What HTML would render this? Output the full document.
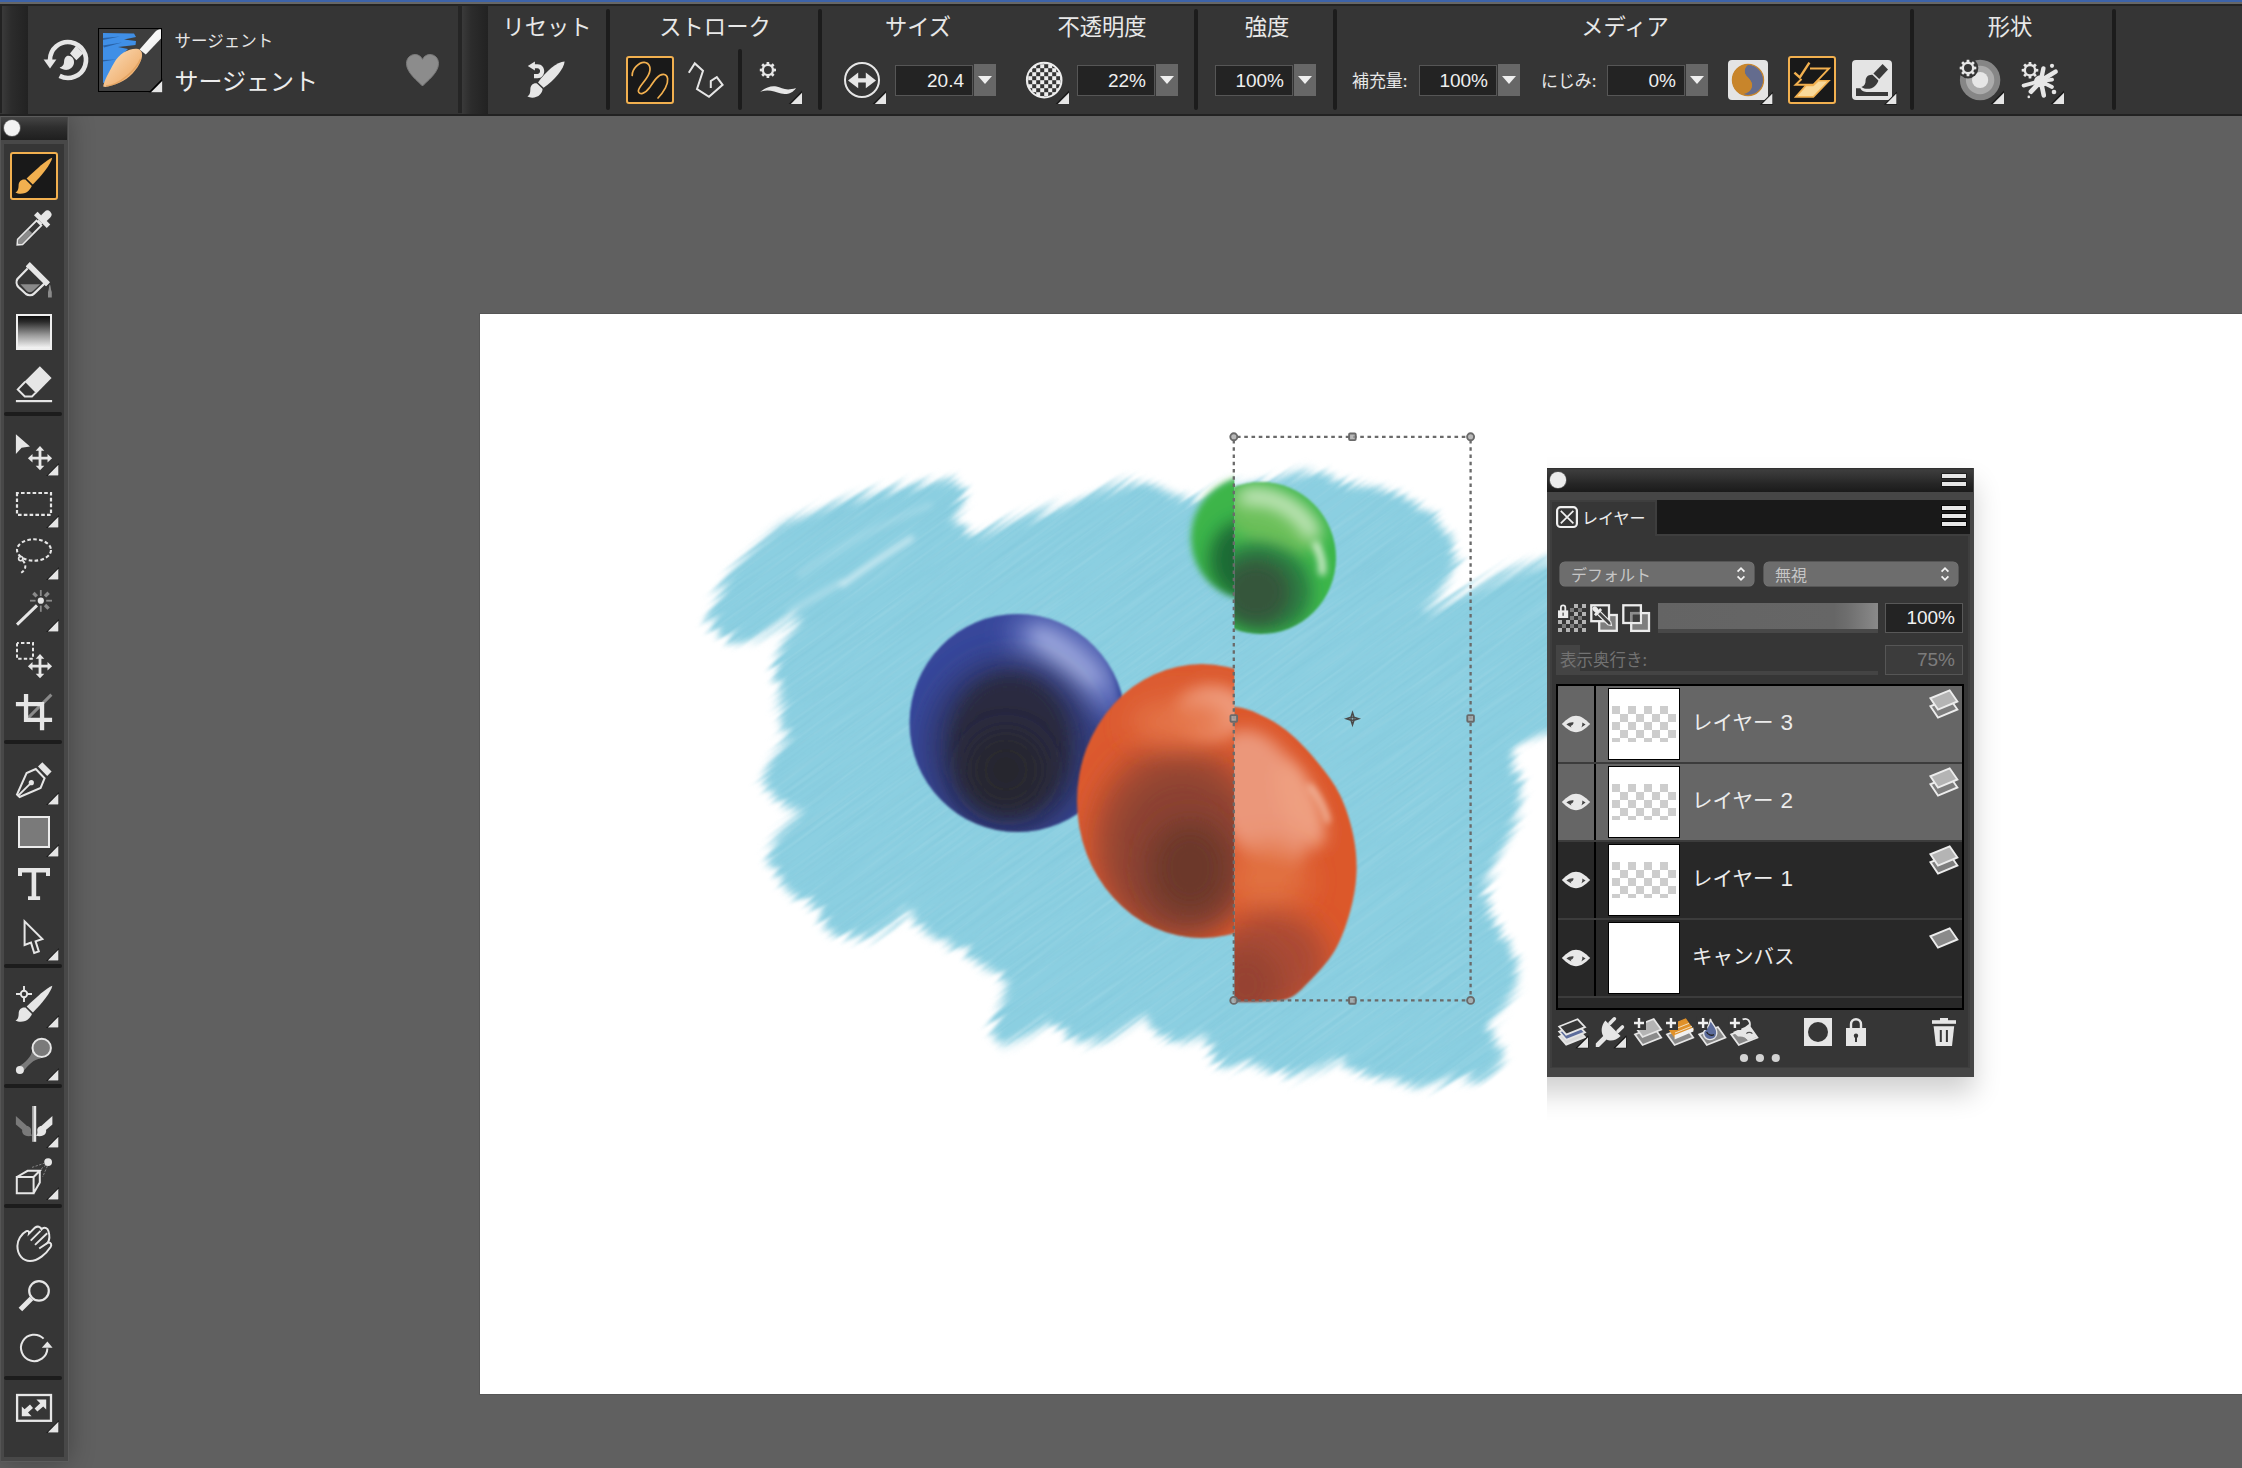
<!DOCTYPE html>
<html lang="ja">
<head>
<meta charset="utf-8">
<title>Painter</title>
<style>
*{box-sizing:border-box;margin:0;padding:0}
html,body{width:2242px;height:1468px;overflow:hidden;background:#606060;font-family:"Liberation Sans","Noto Sans CJK JP",sans-serif;color:#e6e6e6}
.abs{position:absolute}
#strip{left:0;top:0;width:2242px;height:2px;background:#3d63a9}
#topbar{left:0;top:2px;width:2242px;height:114px;background:#353535;border-top:2px solid #666;border-bottom:2px solid #222}
.grip{top:6px;height:108px;background:linear-gradient(90deg,#3a3a3a 0%,#2c2c2c 35%,#222 100%)}
.vsep{width:4px;background:#1c1c1c;border-radius:2px}
.lbl{font-size:22.3px;color:#e8e8e8;white-space:nowrap;line-height:28px;height:28px;text-align:center;font-family:"Noto Sans CJK JP",sans-serif;font-weight:400}
.inp{height:31px;background:#232323;border:1px solid #565656;color:#efefef;font-size:19px;line-height:29px;text-align:right;padding-right:8px;font-family:"Liberation Sans",sans-serif}
.dd{width:22px;height:32px;background:#676767}
.dd:after{content:"";position:absolute;left:4px;top:12px;border-left:7px solid transparent;border-right:7px solid transparent;border-top:8.5px solid #efefef}
.sm{font-size:16.9px;color:#e8e8e8;white-space:nowrap;line-height:24px;font-family:"Noto Sans CJK JP",sans-serif}
.tri{width:0;height:0;border-left:11px solid transparent;border-bottom:11px solid #e6e6e6}
.selbtn{width:48px;height:48px;background:#191919;border:2px solid #f2b04f;border-radius:3px}
#canvas{left:480px;top:314px;width:1762px;height:1080px;background:#fff;box-shadow:0 0 0 1px #565656}
svg{position:absolute;overflow:visible}
</style>
</head>
<body>
<div class="abs" id="canvas"></div>
<!--PAINTING-S-->
<svg style="left:480px;top:314px" width="1762" height="1079" viewBox="480 314 1762 1079">
<defs>
<filter id="fw" x="-10%" y="-10%" width="120%" height="120%" color-interpolation-filters="sRGB"><feGaussianBlur in="SourceGraphic" stdDeviation="4" result="b"/><feTurbulence type="fractalNoise" baseFrequency="0.006 0.22" numOctaves="2" seed="7" result="n"/><feDisplacementMap in="b" in2="n" scale="20" xChannelSelector="R" yChannelSelector="B" result="d"/><feGaussianBlur in="d" stdDeviation="0.9" result="d2"/><feTurbulence type="fractalNoise" baseFrequency="0.01 0.3" numOctaves="2" seed="11" result="n2"/><feColorMatrix in="n2" type="matrix" values="0 0 0 0 1  0 0 0 0 1  0 0 0 0 1  0 0.2 0 0 -0.092" result="w"/><feColorMatrix in="n2" type="matrix" values="0 0 0 0 0.30  0 0 0 0 0.62  0 0 0 0 0.74  0.18 0 0 0 -0.081" result="k"/><feComposite in="w" in2="d2" operator="in" result="wi"/><feComposite in="k" in2="d2" operator="in" result="ki"/><feMerge><feMergeNode in="d2"/><feMergeNode in="ki"/><feMergeNode in="wi"/></feMerge></filter>
<filter id="f1" x="-5%" y="-5%" width="110%" height="110%"><feGaussianBlur stdDeviation="1.3"/></filter>
<filter id="f3" filterUnits="userSpaceOnUse" x="680" y="420" width="900" height="700"><feGaussianBlur stdDeviation="3"/></filter>
<filter id="f8" filterUnits="userSpaceOnUse" x="680" y="420" width="900" height="700"><feGaussianBlur stdDeviation="8"/></filter>
<filter id="f14" filterUnits="userSpaceOnUse" x="680" y="420" width="900" height="700"><feGaussianBlur stdDeviation="14"/></filter>
<clipPath id="cL"><rect x="480" y="314" width="754.4" height="1079"/></clipPath>
<clipPath id="cR"><rect x="1234.4" y="314" width="1100" height="1079"/></clipPath>
<clipPath id="cBlue"><ellipse cx="1017.5" cy="723" rx="108" ry="109"/></clipPath>
<clipPath id="cOL"><ellipse cx="1202" cy="801" rx="125" ry="137"/></clipPath>
<clipPath id="cOR"><path d="M1200.0 712.0 C1206.0 711.2 1224.8 706.0 1236.0 707.0 C1247.2 708.0 1257.5 713.2 1267.0 718.0 C1276.5 722.8 1284.3 728.3 1293.0 736.0 C1301.7 743.7 1311.2 754.2 1319.0 764.0 C1326.8 773.8 1334.3 783.3 1340.0 795.0 C1345.7 806.7 1350.2 821.0 1353.0 834.0 C1355.8 847.0 1357.0 860.0 1356.5 873.0 C1356.0 886.0 1353.7 899.0 1350.0 912.0 C1346.3 925.0 1341.4 939.3 1334.5 951.0 C1327.6 962.7 1316.3 974.1 1308.6 982.0 C1300.8 989.9 1296.1 995.4 1288.0 998.6 C1279.9 1001.9 1268.8 1000.9 1260.0 1001.5 C1251.2 1002.1 1245.0 1002.1 1235.0 1002.0 C1225.0 1001.9 1205.8 1001.2 1200.0 1001.0 Z"/></clipPath>
<clipPath id="cGL"><ellipse cx="1251" cy="538" rx="60" ry="62"/></clipPath>
<clipPath id="cGR"><ellipse cx="1261" cy="558" rx="75" ry="76"/></clipPath>
<pattern id="hatch" width="7" height="7" patternUnits="userSpaceOnUse" patternTransform="rotate(-38)"><rect width="7" height="7" fill="none"/><rect y="0" width="7" height="1.1" fill="#ffffff" fill-opacity="0.10"/><rect y="3.6" width="7" height="0.9" fill="#5fb4cc" fill-opacity="0.10"/></pattern>
</defs>
<g transform="rotate(-36 1100 780)" filter="url(#fw)"><g transform="rotate(36 1100 780)"><polygon points="707,625 716,600 731,571 756,546 781,524 830,504 880,490 930,482 955,480 966,491 960,510 953,522 975,535 1005,523 1055,506 1105,490 1130,482 1150,484 1175,495 1200,500 1235,484 1275,479 1305,471 1325,474 1350,484 1375,487 1400,494 1424,509 1443,526 1453,545 1457,560 1448,580 1434,599 1421,613 1450,599 1475,588 1500,576 1525,566 1547,560 1620,545 1620,715 1547,734 1525,743 1512,748 1515,770 1521,787 1518,810 1508,835 1493,867 1484,890 1488,900 1493,920 1503,935 1517,960 1517,985 1503,1009 1489,1024 1493,1035 1502,1055 1493,1070 1479,1080 1460,1078 1440,1083 1415,1088 1395,1080 1375,1078 1350,1070 1340,1059 1325,1068 1290,1078 1270,1070 1250,1063 1225,1068 1212,1059 1206,1034 1180,1043 1156,1034 1145,1016 1130,1024 1105,1040 1080,1043 1061,1034 1050,1020 1030,1033 1001,1048 994,1035 997,1010 1006,985 1001,972 976,964 963,949 943,943 918,928 910,908 895,923 870,938 846,938 827,929 821,910 801,899 782,884 767,860 777,835 801,811 782,804 762,785 769,765 787,735 777,715 782,690 774,665 782,640 801,616 790,616 756,637 731,641" fill="#8bcfe1"/></g></g>
<g filter="url(#f3)" stroke-linecap="round" fill="none"><path d="M842 585 C860 572 885 555 912 538" stroke="#fff" stroke-opacity="0.85" stroke-width="3.4"/><path d="M800 575 C830 552 870 528 930 505" stroke="#fff" stroke-opacity="0.22" stroke-width="5"/><path d="M790 612 C810 600 828 590 842 582" stroke="#fff" stroke-opacity="0.35" stroke-width="5"/><path d="M1425 610 C1460 598 1500 580 1540 566" stroke="#fff" stroke-opacity="0.25" stroke-width="4"/></g>
<g filter="url(#f1)"><g clip-path="url(#cBlue)"><rect x="900" y="605" width="240" height="240" fill="#37479b"/><ellipse cx="1068" cy="664" rx="66" ry="34" transform="rotate(39 1068 664)" fill="#6f7ec6" filter="url(#f14)"/><ellipse cx="1066" cy="658" rx="44" ry="13" transform="rotate(39 1066 658)" fill="#9ca8de" filter="url(#f8)"/><ellipse cx="1012" cy="748" rx="84" ry="90" fill="#2e3666" filter="url(#f14)"/><ellipse cx="1010" cy="745" rx="60" ry="70" fill="#292b40" filter="url(#f8)"/><ellipse cx="1006" cy="770" rx="40" ry="40" fill="#27282e" filter="url(#f14)"/><path d="M1096 630 C1112 648 1122 675 1124 700" stroke="#2f4297" stroke-width="9" fill="none" filter="url(#f3)"/></g></g>
<g clip-path="url(#cL)"><g filter="url(#f3)"><g clip-path="url(#cGL)"><rect x="1180" y="470" width="140" height="140" fill="#3cb54a"/><ellipse cx="1245" cy="560" rx="36" ry="40" fill="#1d6a36" filter="url(#f8)"/></g></g></g>
<g clip-path="url(#cR)"><g filter="url(#f1)"><g clip-path="url(#cGR)"><rect x="1180" y="478" width="170" height="165" fill="#3cb64b"/><ellipse cx="1272" cy="520" rx="52" ry="30" transform="rotate(25 1272 520)" fill="#6cc05a" filter="url(#f8)"/><path d="M1246 497 C1275 494 1300 510 1312 532" stroke="#cfecca" stroke-width="15" fill="none" stroke-linecap="round" filter="url(#f8)"/><path d="M1316 545 C1321 555 1323 563 1322 572" stroke="#d4efd0" stroke-width="7" fill="none" stroke-linecap="round" filter="url(#f3)"/><ellipse cx="1262" cy="588" rx="50" ry="44" transform="rotate(20 1262 588)" fill="#2c7c42" filter="url(#f8)"/><ellipse cx="1256" cy="592" rx="34" ry="32" fill="#34573a" filter="url(#f8)"/></g></g></g>
<g clip-path="url(#cL)"><g filter="url(#f1)"><g clip-path="url(#cOL)"><rect x="1070" y="660" width="170" height="285" fill="#dc5a2f"/><ellipse cx="1178" cy="842" rx="86" ry="98" fill="#a94c33" filter="url(#f14)"/><ellipse cx="1182" cy="850" rx="70" ry="82" fill="#8c4230" filter="url(#f14)"/><ellipse cx="1190" cy="868" rx="42" ry="48" fill="#6c392b" filter="url(#f14)"/><ellipse cx="1212" cy="712" rx="36" ry="26" fill="#f0a184" filter="url(#f8)"/><ellipse cx="1180" cy="722" rx="50" ry="22" fill="#e4744a" filter="url(#f14)"/></g></g></g>
<g clip-path="url(#cR)"><g filter="url(#f1)"><g clip-path="url(#cOR)"><rect x="1230" y="700" width="135" height="310" fill="#dc582c"/><ellipse cx="1262" cy="800" rx="44" ry="74" transform="rotate(-22 1262 800)" fill="#eb977a" filter="url(#f8)"/><ellipse cx="1300" cy="805" rx="18" ry="46" transform="rotate(-24 1300 805)" fill="#ee9f80" filter="url(#f8)"/><ellipse cx="1268" cy="880" rx="40" ry="34" fill="#e1703f" filter="url(#f14)"/><ellipse cx="1272" cy="962" rx="56" ry="50" fill="#aa4b35" filter="url(#f14)"/><ellipse cx="1246" cy="985" rx="36" ry="40" fill="#964332" filter="url(#f14)"/><path d="M1310 786 C1318 796 1325 808 1328 821" stroke="#f6cdb8" stroke-width="4" fill="none" stroke-linecap="round" filter="url(#f3)"/></g></g></g>
<g fill="none" stroke="#6a6a6a" stroke-width="2.3" stroke-dasharray="3.6 3.65"><path d="M1237 436.8 L1467 436.8 M1237 1000.4 L1467 1000.4 M1233.8 440 L1233.8 997 M1470.6 440 L1470.6 997"/></g>
<circle cx="1233.8" cy="436.8" r="3.5" fill="#a8a8a8" fill-opacity="0.8" stroke="#6a6a6a" stroke-width="1.9"/>
<circle cx="1470.6" cy="436.8" r="3.5" fill="#a8a8a8" fill-opacity="0.8" stroke="#6a6a6a" stroke-width="1.9"/>
<circle cx="1233.8" cy="1000.4" r="3.5" fill="#a8a8a8" fill-opacity="0.8" stroke="#6a6a6a" stroke-width="1.9"/>
<circle cx="1470.6" cy="1000.4" r="3.5" fill="#a8a8a8" fill-opacity="0.8" stroke="#6a6a6a" stroke-width="1.9"/>
<rect x="1349.1" y="433.5" width="6.6" height="6.6" rx="1" fill="#a8a8a8" fill-opacity="0.8" stroke="#6a6a6a" stroke-width="1.9"/>
<rect x="1349.1" y="997.1" width="6.6" height="6.6" rx="1" fill="#a8a8a8" fill-opacity="0.8" stroke="#6a6a6a" stroke-width="1.9"/>
<rect x="1230.5" y="715.1" width="6.6" height="6.6" rx="1" fill="#a8a8a8" fill-opacity="0.8" stroke="#6a6a6a" stroke-width="1.9"/>
<rect x="1467.3" y="715.1" width="6.6" height="6.6" rx="1" fill="#a8a8a8" fill-opacity="0.8" stroke="#6a6a6a" stroke-width="1.9"/>
<path d="M1352.5 712.6 L1354 717.2 L1358.6 718.7 L1354 720.2 L1352.5 724.8 L1351 720.2 L1346.4 718.7 L1351 717.2 Z" fill="#8a8a8a" fill-opacity="0.5" stroke="#4a4a4a" stroke-width="1.5"/><circle cx="1352.5" cy="718.7" r="1.6" fill="none" stroke="#4a4a4a" stroke-width="1.2"/>
</svg>
<!--PAINTING-E-->
<!--TOOLBOX-S-->
<div class="abs" style="left:0;top:116px;width:69px;height:1346px;background:#484848;border:1px solid #5c5c5c;border-left-color:#555;box-shadow:0 0 26px rgba(0,0,0,0.30)"></div>
<div class="abs" style="left:1px;top:117px;width:66px;height:23px;background:linear-gradient(180deg,#454545 0%,#2e2e2e 45%,#1f1f1f 100%)"></div>
<div class="abs" style="left:4px;top:120px;width:16px;height:16px;border-radius:50%;background:#f2f2f2;box-shadow:0 0 0 0.8px #666"></div>
<div class="abs" style="left:4px;top:144px;width:60px;height:1313px;background:#363636"></div>
<div class="abs" style="left:4px;top:412px;width:58px;height:4px;border-radius:2px;background:#1c1c1c"></div>
<div class="abs" style="left:4px;top:740px;width:58px;height:4px;border-radius:2px;background:#1c1c1c"></div>
<div class="abs" style="left:4px;top:964px;width:58px;height:4px;border-radius:2px;background:#1c1c1c"></div>
<div class="abs" style="left:4px;top:1084px;width:58px;height:4px;border-radius:2px;background:#1c1c1c"></div>
<div class="abs" style="left:4px;top:1204px;width:58px;height:4px;border-radius:2px;background:#1c1c1c"></div>
<div class="abs" style="left:4px;top:1376px;width:58px;height:4px;border-radius:2px;background:#1c1c1c"></div>
<div class="abs selbtn" style="left:10px;top:152px"></div>
<svg style="left:8px;top:152px" width="54" height="48" viewBox="8 152 54 48"><path d="M52.2 157.8 C47.0 159.4 36.0 169.6 26.6 178.4 L32.8 184.6 C41.6 175.6 51.4 163.6 52.2 157.8 Z" fill="#f2b04f"/><path d="M25.4 179.6 C21.6 178.8 18.8 181.4 18.6 185.0 C18.5 188.6 18.2 191.0 15.4 192.6 C19.4 194.8 25.6 194.0 28.8 190.6 C31.4 187.6 32.2 185.6 31.6 185.8 Z" fill="#f2b04f"/></svg>
<svg style="left:8px;top:204px" width="54" height="48" viewBox="8 204 54 48"><g transform="rotate(45 34 228)"><rect x="30" y="205" width="8" height="12" rx="4" fill="#e6e6e6"/><rect x="25" y="214" width="18" height="5" fill="#e6e6e6"/><rect x="31.2" y="219" width="5.6" height="4" fill="#e6e6e6"/><path d="M30.6 221 L37.4 221 L37.4 247.6 L34 251.6 L30.6 247.6 Z" fill="#353535" stroke="#e6e6e6" stroke-width="1.8"/><path d="M31.4 233 L36.6 233 L36.6 247.2 L34 250.2 L31.4 247.2 Z" fill="#8a8a8a"/></g></svg>
<svg style="left:8px;top:256px" width="54" height="48" viewBox="8 256 54 48"><path d="M27.6 268.6 L17.4 279 C16 281 16.4 284.6 18.4 287 L26 294 C28.4 295.8 32 295.6 34 293.6 L44.4 283.6" fill="none" stroke="#e6e6e6" stroke-width="2.2"/><path d="M20.4 284.2 L40.2 284.2 L33 291 C31 292.6 28.6 292.6 27 291.2 Z" fill="#8a8a8a"/><path d="M29.8 262 L50 282.2 L46 286.2 L44 284.2 L45 283 L29.4 267.6 L28 268.8 L25.8 266.4 Z" fill="#e6e6e6"/><path d="M27.6 264.6 L47.6 284.4" stroke="#e6e6e6" stroke-width="4.6"/><path d="M49.8 284.6 C50.6 284.6 50.8 290 51.8 292 L51.8 297.4 L48 297.4 L48 292 C49 290 49 284.6 49.8 284.6 Z" fill="#8a8a8a"/></svg>
<div class="abs" style="left:16px;top:314px;width:36px;height:36px;border:2px solid #efefef;background:linear-gradient(180deg,#0c0c0c 0%,#2a2a2a 18%,#9a9a9a 60%,#f4f4f4 100%)"></div>
<svg style="left:8px;top:360px" width="54" height="48" viewBox="8 360 54 48"><path d="M39.9 366.2 L51.6 378 L32.4 397.4 L24.4 397.4 L16.6 389.6 Z" fill="#353535"/><path d="M39.9 366.2 L51.6 378 L36.4 393.4 L24.6 381.6 Z" fill="#e6e6e6"/><path d="M25.2 381.8 L17.8 389.4 L24.8 396.4 L32 396.4 L35.8 392.6" fill="none" stroke="#e6e6e6" stroke-width="2"/><rect x="15.9" y="400" width="36.2" height="2.2" fill="#e6e6e6"/></svg>
<svg style="left:8px;top:428px" width="54" height="50" viewBox="8 428 54 50"><path d="M15.9 434.2 L30 446.6 L21.6 447.8 L15.9 454 Z" fill="#e6e6e6"/><path d="M40.0 446.1 L44.3 450.7 L41.4 450.7 L41.4 456.8 L47.5 456.8 L47.5 453.9 L52.1 458.2 L47.5 462.5 L47.5 459.6 L41.4 459.6 L41.4 465.7 L44.3 465.7 L40.0 470.3 L35.7 465.7 L38.6 465.7 L38.6 459.6 L32.5 459.6 L32.5 462.5 L27.9 458.2 L32.5 453.9 L32.5 456.8 L38.6 456.8 L38.6 450.7 L35.7 450.7 Z" fill="#e6e6e6"/></svg>
<svg style="left:45.8px;top:463.4px" width="13" height="13" viewBox="0 0 13 13"><path d="M13 0 L13 13 L0 13 Z" fill="#1a1a1a"/><path d="M12.4 1.8 L12.4 12.4 L1.8 12.4 Z" fill="#e6e6e6"/></svg>
<svg style="left:8px;top:480px" width="54" height="50" viewBox="8 480 54 50"><rect x="17" y="493" width="34" height="21.8" fill="none" stroke="#e6e6e6" stroke-width="2.2" stroke-dasharray="3.6 2.2" stroke-dashoffset="1.8"/></svg>
<svg style="left:45.8px;top:515.4px" width="13" height="13" viewBox="0 0 13 13"><path d="M13 0 L13 13 L0 13 Z" fill="#1a1a1a"/><path d="M12.4 1.8 L12.4 12.4 L1.8 12.4 Z" fill="#e6e6e6"/></svg>
<svg style="left:8px;top:532px" width="54" height="50" viewBox="8 532 54 50"><ellipse cx="34" cy="550" rx="17" ry="10.7" fill="none" stroke="#e6e6e6" stroke-width="2.1" stroke-dasharray="3.6 2.3"/><circle cx="20.7" cy="558.6" r="2.1" fill="none" stroke="#e6e6e6" stroke-width="1.6"/><path d="M22.6 560.4 C27 565 26 570 20.4 573.2" fill="none" stroke="#e6e6e6" stroke-width="2" stroke-dasharray="3.4 2.2"/></svg>
<svg style="left:45.8px;top:567.4px" width="13" height="13" viewBox="0 0 13 13"><path d="M13 0 L13 13 L0 13 Z" fill="#1a1a1a"/><path d="M12.4 1.8 L12.4 12.4 L1.8 12.4 Z" fill="#e6e6e6"/></svg>
<svg style="left:8px;top:584px" width="54" height="50" viewBox="8 584 54 50"><path d="M17 624.6 L37 605.4" stroke="#e6e6e6" stroke-width="3" fill="none"/><circle cx="40.8" cy="600.7" r="3.1" fill="#e6e6e6"/><path d="M40.8 590.0 L40.8 596.0" stroke="#8a8a8a" stroke-width="1.8"/><path d="M40.8 605.6 L40.8 611.8" stroke="#8a8a8a" stroke-width="1.8"/><path d="M30.0 600.7 L35.6 600.7" stroke="#8a8a8a" stroke-width="1.8"/><path d="M46.2 600.7 L52.0 600.7" stroke="#8a8a8a" stroke-width="1.8"/><path d="M33.4 593.0 L36.8 596.4" stroke="#8a8a8a" stroke-width="3.4"/><path d="M45.0 596.4 L48.6 592.8" stroke="#8a8a8a" stroke-width="3.4"/><path d="M45.0 605.0 L48.6 608.6" stroke="#8a8a8a" stroke-width="3.4"/></svg>
<svg style="left:45.8px;top:619.4px" width="13" height="13" viewBox="0 0 13 13"><path d="M13 0 L13 13 L0 13 Z" fill="#1a1a1a"/><path d="M12.4 1.8 L12.4 12.4 L1.8 12.4 Z" fill="#e6e6e6"/></svg>
<svg style="left:8px;top:636px" width="54" height="48" viewBox="8 636 54 48"><rect x="17" y="643" width="16" height="15.8" fill="none" stroke="#e6e6e6" stroke-width="2" stroke-dasharray="3.4 2.2" stroke-dashoffset="1.6"/><path d="M40.0 654.1 L44.3 658.7 L41.4 658.7 L41.4 664.8 L47.5 664.8 L47.5 661.9 L52.1 666.2 L47.5 670.5 L47.5 667.6 L41.4 667.6 L41.4 673.7 L44.3 673.7 L40.0 678.3 L35.7 673.7 L38.6 673.7 L38.6 667.6 L32.5 667.6 L32.5 670.5 L27.9 666.2 L32.5 661.9 L32.5 664.8 L38.6 664.8 L38.6 658.7 L35.7 658.7 Z" fill="#e6e6e6"/></svg>
<svg style="left:8px;top:688px" width="54" height="48" viewBox="8 688 54 48"><path d="M28.4 717.6 L51.4 694.6" stroke="#8a8a8a" stroke-width="3"/><path d="M15.9 702 L44.2 702 L44.2 730.2 L39.9 730.2 L39.9 706.3 L15.9 706.3 Z" fill="#e6e6e6"/><path d="M23.9 694 L28.2 694 L28.2 717.7 L52.1 717.7 L52.1 722 L23.9 722 Z" fill="#e6e6e6"/></svg>
<svg style="left:8px;top:756px" width="54" height="50" viewBox="8 756 54 50"><path d="M42.3 762.2 L51.6 771.6 L47.2 776 L38 766.6 Z" fill="#e6e6e6"/><path d="M35.8 769 L26.6 773 L17 794.6 L19.6 797 L40.6 788 L44.6 778.2 Z" fill="none" stroke="#e6e6e6" stroke-width="2" stroke-linejoin="miter"/><path d="M17.8 796 L30.6 783.4" stroke="#e6e6e6" stroke-width="1.8"/><circle cx="31.3" cy="782.7" r="2.6" fill="#e6e6e6"/></svg>
<svg style="left:45.8px;top:791.6px" width="13" height="13" viewBox="0 0 13 13"><path d="M13 0 L13 13 L0 13 Z" fill="#1a1a1a"/><path d="M12.4 1.8 L12.4 12.4 L1.8 12.4 Z" fill="#e6e6e6"/></svg>
<div class="abs" style="left:18px;top:816px;width:32px;height:32px;border:2px solid #ececec;background:#7a7a7a"></div>
<svg style="left:45.8px;top:843.6px" width="13" height="13" viewBox="0 0 13 13"><path d="M13 0 L13 13 L0 13 Z" fill="#1a1a1a"/><path d="M12.4 1.8 L12.4 12.4 L1.8 12.4 Z" fill="#e6e6e6"/></svg>
<svg style="left:8px;top:860px" width="54" height="48" viewBox="8 860 54 48"><path d="M18 868.1 L50 868.1 L50 876 L46 876 L46 872.4 L36.2 872.4 L36.2 896.3 L40.1 896.3 L40.1 900 L28 900 L28 896.3 L31.6 896.3 L31.6 872.4 L22 872.4 L22 876 L18 876 Z" fill="#e6e6e6"/></svg>
<svg style="left:8px;top:912px" width="54" height="50" viewBox="8 912 54 50"><path d="M24.6 921.4 L24.6 945 L31 942.6 L34.2 953 L38.8 951.4 L35.6 941.4 L42.4 939 Z" fill="none" stroke="#e6e6e6" stroke-width="2" stroke-linejoin="miter"/></svg>
<svg style="left:45.8px;top:947.6px" width="13" height="13" viewBox="0 0 13 13"><path d="M13 0 L13 13 L0 13 Z" fill="#1a1a1a"/><path d="M12.4 1.8 L12.4 12.4 L1.8 12.4 Z" fill="#e6e6e6"/></svg>
<svg style="left:8px;top:980px" width="54" height="50" viewBox="8 980 54 50"><path d="M52.3 985.8 C47.1 987.4 36.1 997.6 26.7 1006.4 L32.9 1012.6 C41.7 1003.6 51.5 991.6 52.3 985.8 Z" fill="#e6e6e6"/><path d="M25.5 1007.6 C21.7 1006.8 18.9 1009.4 18.7 1013.0 C18.6 1016.6 18.3 1019.0 15.5 1020.6 C19.5 1022.8 25.7 1022.0 28.9 1018.6 C31.5 1015.6 32.3 1013.6 31.7 1013.8 Z" fill="#e6e6e6"/><path d="M16 994 L32 994 M24 986 L24 1002" stroke="#e6e6e6" stroke-width="1.9"/><circle cx="24" cy="994" r="3.2" fill="#363636" stroke="#e6e6e6" stroke-width="1.9"/></svg>
<svg style="left:45.8px;top:1015.2px" width="13" height="13" viewBox="0 0 13 13"><path d="M13 0 L13 13 L0 13 Z" fill="#1a1a1a"/><path d="M12.4 1.8 L12.4 12.4 L1.8 12.4 Z" fill="#e6e6e6"/></svg>
<svg style="left:8px;top:1032px" width="54" height="50" viewBox="8 1032 54 50"><path d="M32.4 1050 C31.6 1057 25 1062.6 17.6 1067.4 L22.6 1072.6 C27.6 1065.4 33.6 1059 41 1058.4 Z" fill="#7a7a7a"/><circle cx="41.7" cy="1047.9" r="9.2" fill="#7a7a7a" stroke="#e6e6e6" stroke-width="2"/><circle cx="19.9" cy="1070" r="4" fill="#e6e6e6"/></svg>
<svg style="left:45.8px;top:1067.6px" width="13" height="13" viewBox="0 0 13 13"><path d="M13 0 L13 13 L0 13 Z" fill="#1a1a1a"/><path d="M12.4 1.8 L12.4 12.4 L1.8 12.4 Z" fill="#e6e6e6"/></svg>
<svg style="left:8px;top:1100px" width="54" height="50" viewBox="8 1100 54 50"><path d="M15.9 1116 L15.9 1124.6 L23.6 1131 L27.6 1126.4 Z" fill="#7a7a7a"/><path d="M24.2 1127 C27.6 1124.4 31.6 1127.4 31 1131 C30.6 1133.4 31.2 1134.8 32.6 1135.6 C29 1137 24.6 1136.4 22.8 1133.6 C21.4 1131.4 22.2 1128.6 24.2 1127 Z" fill="#7a7a7a"/><path d="M52.4 1116 L52.4 1124.6 L44.7 1131 L40.7 1126.4 Z" fill="#e6e6e6"/><path d="M44.1 1127 C40.7 1124.4 36.7 1127.4 37.3 1131 C37.7 1133.4 37.1 1134.8 35.7 1135.6 C39.3 1137 43.7 1136.4 45.5 1133.6 C46.9 1131.4 46.1 1128.6 44.1 1127 Z" fill="#e6e6e6"/><rect x="32.1" y="1106" width="1.5" height="35.8" fill="#a8a8a8"/><rect x="33.5" y="1106" width="2.7" height="35.8" fill="#e6e6e6"/></svg>
<svg style="left:45.8px;top:1135.4px" width="13" height="13" viewBox="0 0 13 13"><path d="M13 0 L13 13 L0 13 Z" fill="#1a1a1a"/><path d="M12.4 1.8 L12.4 12.4 L1.8 12.4 Z" fill="#e6e6e6"/></svg>
<svg style="left:8px;top:1152px" width="54" height="50" viewBox="8 1152 54 50"><path d="M16.8 1177 L33.6 1177 L33.6 1193.2 L16.8 1193.2 Z M16.8 1177 L27.6 1170.8 L39.8 1170.8 L33.6 1177 M39.8 1170.8 L39.8 1182.4 L33.6 1193.2" fill="none" stroke="#e6e6e6" stroke-width="2" stroke-linejoin="miter"/><circle cx="48.1" cy="1162.1" r="3.9" fill="#e6e6e6"/><path d="M45 1163 L32 1167.4 M46 1165 L40.6 1169.4 M47.4 1166 L42.6 1177" stroke="#8a8a8a" stroke-width="0.9" stroke-dasharray="2.4 1.4" fill="none"/></svg>
<svg style="left:45.8px;top:1187.4px" width="13" height="13" viewBox="0 0 13 13"><path d="M13 0 L13 13 L0 13 Z" fill="#1a1a1a"/><path d="M12.4 1.8 L12.4 12.4 L1.8 12.4 Z" fill="#e6e6e6"/></svg>
<svg style="left:8px;top:1220px" width="54" height="48" viewBox="8 1220 54 48"><path d="M26.4 1231.2 C21 1234 17.4 1240 17.4 1246 C17.4 1255 23 1261 30 1261 C38 1261 46 1254 50.6 1247 C52 1244.6 51 1242.4 48.6 1242.4 L47.6 1242.8 C49.6 1240 50 1236 48.4 1231 C47.6 1228.4 45 1227 42.6 1228.4 L41.6 1229.4 C40.6 1226.6 37.4 1225.8 35 1227.6 L29 1233.6 C29.4 1231.4 28 1230.4 26.4 1231.2 Z" fill="none" stroke="#e6e6e6" stroke-width="2"/><path d="M30.7 1240.6 L40.5 1230.8 M35 1244.9 L47.2 1233.2 M39.2 1248.5 L48 1242.6" stroke="#e6e6e6" stroke-width="1.9" fill="none"/></svg>
<svg style="left:8px;top:1272px" width="54" height="48" viewBox="8 1272 54 48"><circle cx="39" cy="1290.9" r="9.8" fill="none" stroke="#e6e6e6" stroke-width="2.2"/><path d="M31.4 1298.6 L20.4 1309.6" stroke="#e6e6e6" stroke-width="5"/></svg>
<svg style="left:8px;top:1324px" width="54" height="48" viewBox="8 1324 54 48"><path d="M47.4 1348.4 A13.2 13.2 0 1 1 43.6 1338.6" fill="none" stroke="#e6e6e6" stroke-width="2"/><path d="M41.8 1347.8 L47.4 1341.4 L52.6 1347.8 Z" fill="#e6e6e6"/></svg>
<svg style="left:8px;top:1384px" width="54" height="50" viewBox="8 1384 54 50"><rect x="17.1" y="1395" width="33.9" height="25.8" fill="none" stroke="#e6e6e6" stroke-width="2.3"/><path d="M21.8 1416.2 L21.8 1406.4 L24.6 1409.2 L30 1404.6 L33 1408 L28 1412.4 L31.6 1416.2 Z" fill="#e6e6e6"/><path d="M46.2 1399.4 L46.2 1409.4 L43.2 1406.4 L37.4 1411.6 L34.6 1408.4 L40.2 1403.2 L36.4 1399.4 Z" fill="#e6e6e6"/></svg>
<svg style="left:45.8px;top:1419.6px" width="13" height="13" viewBox="0 0 13 13"><path d="M13 0 L13 13 L0 13 Z" fill="#1a1a1a"/><path d="M12.4 1.8 L12.4 12.4 L1.8 12.4 Z" fill="#e6e6e6"/></svg>
<!--TOOLBOX-E-->
<div class="abs" id="strip"></div>
<div class="abs" id="topbar"></div>
<div class="abs" style="left:0;top:4px;width:2242px;height:2px;background:#232323"></div>
<!--TOPBAR-S-->
<div class="abs" style="left:0;top:5px;width:2px;height:108px;background:#222"></div>
<div class="abs grip" style="left:2px;width:26px"></div>
<div class="abs" style="left:458px;top:5px;width:4px;height:108px;background:#252525"></div>
<div class="abs grip" style="left:462px;width:26px"></div>
<!-- reset variant icon -->
<svg style="left:40px;top:34px" width="56" height="52" viewBox="40 34 56 52">
 <path d="M50 60 A18 18 0 1 1 59.6 75.9" fill="none" stroke="#e6e6e6" stroke-width="4.6"/>
 <path d="M43.6 59.6 L56.4 59.6 L50 68.4 Z" fill="#e6e6e6"/>
 <path d="M76.3 45.6 L83.2 53.6 L76.4 60.2 L70 53.4 Z" fill="#e6e6e6"/>
 <path d="M66.5 56.2 C70.5 54.6 74.6 58.2 74 63 C73.4 67.6 69 70.6 64.4 69.8 C62.4 69.5 60.6 68.6 59.6 67.6 C62.6 66.8 63.8 65 64 62.6 C64.1 60 64.4 57.4 66.5 56.2 Z" fill="#e6e6e6"/>
</svg>
<!-- brush thumbnail -->
<div class="abs" style="left:98px;top:28px;width:64px;height:64px;background:#3e3e3e;border:1px solid #000;overflow:hidden">
<svg style="left:-1px;top:-1px" width="64" height="64" viewBox="98 28 64 64">
 <defs>
  <linearGradient id="bg1" x1="0" y1="0" x2="1" y2="1"><stop offset="0" stop-color="#fbe0bf"/><stop offset="0.55" stop-color="#f3bd85"/><stop offset="1" stop-color="#e9a25a"/></linearGradient>
  <linearGradient id="bh1" x1="0" y1="0" x2="1" y2="1"><stop offset="0" stop-color="#ffffff"/><stop offset="0.6" stop-color="#f4f4f4"/><stop offset="1" stop-color="#cfcfcf"/></linearGradient>
  <filter id="b05"><feGaussianBlur stdDeviation="0.5"/></filter>
 </defs>
 <g filter="url(#b05)">
 <path d="M103 33 L134 33.5 L136 37 L124 39.5 L136 41 L135.5 45 L118 47 L128 49 L121 56 L113 70 L107 82 L103 83 Z" fill="#3f8fe6"/>
 <path d="M103 38 L120 36.5 L103 40 Z M103 45.5 L122 42.5 L104 47.5 Z M103 60 L116 59.5 L103 61.5Z" fill="#2a62a6"/>
 <path d="M139.6 49.4 L155 32 C157.4 29.6 160.4 28.6 162 30 L162 37.6 L145.8 54.6 Z" fill="url(#bh1)"/>
 <path d="M103.2 86.6 C104 81 109 72 114 63 C119 54 128 48.6 136.4 48.8 C142 49.2 143.4 54 141 60.6 C137.6 69.6 129 78.6 120 82.6 C113 85.8 106 87.6 103.2 86.6 Z" fill="url(#bg1)"/><path d="M106 86 C112 85.6 120 82 127 76 C133 71 138 65 140.6 59" stroke="#d9964e" stroke-opacity="0.55" stroke-width="1.6" fill="none"/>
 </g>
</svg>
</div>
<svg style="left:148px;top:78px" width="15" height="15" viewBox="148 78 15 15"><path d="M162.2 78.6 L162.2 92.2 L148.6 92.2 Z" fill="#000"/><path d="M162.2 81 L162.2 92.2 L151 92.2 Z" fill="#e6e6e6"/></svg>
<div class="abs" style="left:174.5px;top:27.5px;font-size:16.5px;line-height:24px;color:#e6e6e6;font-family:'Noto Sans CJK JP',sans-serif;white-space:nowrap">サージェント</div>
<div class="abs" style="left:174.5px;top:62.5px;font-size:24px;line-height:34px;color:#ededed;font-family:'Noto Sans CJK JP',sans-serif;white-space:nowrap">サージェント</div>
<!-- heart -->
<svg style="left:405px;top:53px" width="36" height="34" viewBox="405 53 36 34">
 <path d="M422.5 86 C418 81 406.5 73 406.5 63.5 C406.5 58 410.5 54.5 415 54.5 C418.5 54.5 421.3 56.5 422.5 59.5 C423.7 56.5 426.5 54.5 430 54.5 C434.5 54.5 438.5 58 438.5 63.5 C438.5 73 427 81 422.5 86 Z" fill="#8c8c8c" stroke="#7a7a7a" stroke-width="1"/>
</svg>
<div class="abs vsep" style="left:606px;top:9px;height:101px"></div>
<div class="abs vsep" style="left:818px;top:9px;height:101px"></div>
<div class="abs vsep" style="left:1194px;top:9px;height:101px"></div>
<div class="abs vsep" style="left:1333px;top:9px;height:101px"></div>
<div class="abs vsep" style="left:1910px;top:9px;height:101px"></div>
<div class="abs vsep" style="left:2112px;top:9px;height:101px"></div>
<div class="abs vsep" style="left:738px;top:49px;height:61px"></div>
<div class="abs lbl" style="left:447px;top:11px;width:200px">リセット</div>
<div class="abs lbl" style="left:615px;top:11px;width:200px">ストローク</div>
<div class="abs lbl" style="left:818px;top:11px;width:200px">サイズ</div>
<div class="abs lbl" style="left:1002px;top:11px;width:200px">不透明度</div>
<div class="abs lbl" style="left:1167px;top:11px;width:200px">強度</div>
<div class="abs lbl" style="left:1525px;top:11px;width:200px">メディア</div>
<div class="abs lbl" style="left:1910px;top:11px;width:200px">形状</div>
<svg style="left:520px;top:56px" width="52" height="48" viewBox="520 56 52 48">
<path d="M564.6 61.4 C557 61.6 546 71 538 82.4 L543.6 87.8 C554.6 79.6 564 69 564.6 61.4 Z" fill="#e6e6e6"/>
<path d="M537 83.6 C534 82.6 530.6 85 530.4 88.6 C530.2 92.4 530.2 95 527.4 96.6 C531 98.6 537 98 540 94.6 C542.6 91.6 543 88.6 542.2 88.4 Z" fill="#e6e6e6"/>
<path d="M527.8 65.9 L534.9 61.6 L534.9 64.2 L537.5 64.2 C546.5 64.2 546.5 78.2 537.5 78.2 L534 78.2 L534 74 L537.3 74 C541 74 541 68.3 537.3 68.3 L534.9 68.3 L534.9 70.4 Z" fill="#e6e6e6"/>
</svg>
<div class="abs selbtn" style="left:626px;top:56px"></div>
<svg style="left:626px;top:56px" width="48" height="48" viewBox="626 56 48 48">
<path d="M632.2 75.5 C632 69 639 62.2 644.2 62.4 C649.6 62.8 651.6 68.4 648.6 74.6 C645 82 637.6 87.6 638.4 91.4 C639.2 95 645 94.2 649.6 87.6 C654.6 80 658.6 74.2 663.4 74.4 C668.6 74.8 668.8 81.6 665.4 87.8 C663 92.2 660.4 95.6 658 98" fill="none" stroke="#f2b04f" stroke-width="1.7" stroke-linecap="round"/>
</svg>
<svg style="left:684px;top:58px" width="44" height="44" viewBox="684 58 44 44">
<path d="M688.8 72.8 L694.8 63.4 L703 70.8 L697 89 L709 96.8 L722.6 84.8 L716.8 77.2 L710.8 81 L710.8 88" fill="none" stroke="#e6e6e6" stroke-width="2"/>
</svg>
<svg style="left:755px;top:58px" width="50" height="48" viewBox="755 58 50 48"><path d="M773.93 68.55 L776.00 68.72 L776.00 71.28 L773.93 71.45 L773.19 73.24 L774.53 74.82 L772.72 76.63 L771.14 75.29 L769.35 76.03 L769.18 78.10 L766.62 78.10 L766.45 76.03 L764.66 75.29 L763.08 76.63 L761.27 74.82 L762.61 73.24 L761.87 71.45 L759.80 71.28 L759.80 68.72 L761.87 68.55 L762.61 66.76 L761.27 65.18 L763.08 63.37 L764.66 64.71 L766.45 63.97 L766.62 61.90 L769.18 61.90 L769.35 63.97 L771.14 64.71 L772.72 63.37 L774.53 65.18 L773.19 66.76 Z M764.00 70.00 a3.90 3.90 0 1 0 7.80 0 a3.90 3.90 0 1 0 -7.80 0 Z" fill="#e6e6e6" fill-rule="evenodd"/><path d="M760.2 91.8 C765 88 771 85.2 776.5 86.6 C782 88 786 91.2 796 88 C793 93 787 95 781 93.6 C774 91.8 769 88.8 760.2 91.8 Z" fill="#e6e6e6"/>
</svg>
<svg style="left:788.4px;top:90.0px" width="14" height="14" viewBox="0 0 14 14"><path d="M14 0.6 L14 14 L0.6 14 Z" fill="#1a1a1a"/><path d="M14 2.8 L14 14 L2.8 14 Z" fill="#e6e6e6"/></svg>
<svg style="left:842px;top:60px" width="40" height="40" viewBox="842 60 40 40">
<circle cx="862" cy="80" r="17" fill="none" stroke="#e6e6e6" stroke-width="2"/>
<path d="M848 80.4 L858.2 72.6 L858.2 78.2 L865.8 78.2 L865.8 72.6 L876 80.4 L865.8 88.2 L865.8 82.6 L858.2 82.6 L858.2 88.2 Z" fill="#e6e6e6"/>
</svg>
<svg style="left:872.4px;top:90.0px" width="14" height="14" viewBox="0 0 14 14"><path d="M14 0.6 L14 14 L0.6 14 Z" fill="#1a1a1a"/><path d="M14 2.8 L14 14 L2.8 14 Z" fill="#e6e6e6"/></svg>
<div class="abs inp" style="left:895px;top:65px;width:78px">20.4</div>
<div class="abs dd" style="left:974px;top:64px"></div>
<svg style="left:1024px;top:60px" width="40" height="40" viewBox="1024 60 40 40">
<defs><pattern id="chk4" x="1028.2" y="64.2" width="8" height="8" patternUnits="userSpaceOnUse"><rect width="8" height="8" fill="#ededed"/><rect x="0" y="0" width="4" height="4" fill="#353535"/><rect x="4" y="4" width="4" height="4" fill="#353535"/></pattern></defs>
<circle cx="1044.2" cy="80.1" r="17.3" fill="url(#chk4)" stroke="#ededed" stroke-width="2"/>
</svg>
<svg style="left:1054.6px;top:90.0px" width="14" height="14" viewBox="0 0 14 14"><path d="M14 0.6 L14 14 L0.6 14 Z" fill="#1a1a1a"/><path d="M14 2.8 L14 14 L2.8 14 Z" fill="#e6e6e6"/></svg>
<div class="abs inp" style="left:1077px;top:65px;width:78px">22%</div>
<div class="abs dd" style="left:1156px;top:64px"></div>
<div class="abs inp" style="left:1215px;top:65px;width:78px">100%</div>
<div class="abs dd" style="left:1294px;top:64px"></div>
<div class="abs sm" style="left:1352px;top:68px">補充量:</div>
<div class="abs inp" style="left:1419px;top:65px;width:78px">100%</div>
<div class="abs dd" style="left:1498px;top:64px"></div>
<div class="abs sm" style="left:1541px;top:68px">にじみ:</div>
<div class="abs inp" style="left:1607px;top:65px;width:78px">0%</div>
<div class="abs dd" style="left:1686px;top:64px"></div>
<div class="abs" style="left:1728px;top:60px;width:40px;height:40px;background:#e4e4e4;border-radius:4px"></div>
<svg style="left:1728px;top:60px" width="46" height="46" viewBox="1728 60 46 46">
<circle cx="1748" cy="80" r="15.6" fill="#646c8e" stroke="#c8852b" stroke-width="1.2"/>
<path d="M1748.6 64.4 C1744 67 1743.4 72.6 1747 76.4 C1751 80.6 1753.4 84 1751 88.6 C1749 92.2 1745 94 1741 92.4 C1745 96 1751 96.4 1748 95.6 A15.6 15.6 0 0 1 1748.6 64.4 Z" fill="#c8852b"/>
<path d="M1748.6 64.4 A15.6 15.6 0 0 0 1741 93.9 C1745.5 94.5 1750 92 1751.6 88 C1753.4 83.4 1750.6 80 1747 76.4 C1743.4 72.6 1744 67 1748.6 64.4 Z" fill="#c8852b"/>
<path d="M1773 91.6 L1773 104.8 L1759.8 104.8 Z" fill="#1a1a1a"/>
<path d="M1772.4 93.6 L1772.4 104 L1762 104 Z" fill="#e6e6e6"/>
</svg>
<div class="abs selbtn" style="left:1788px;top:56px"></div>
<svg style="left:1788px;top:56px" width="48" height="48" viewBox="1788 56 48 48">
<path d="M1829 80.8 L1813.4 96.9 L1795.6 96.9 L1806 85.4 L1813 85.4 L1818 80.8 Z" fill="#f9d99a" stroke="#f2b04f" stroke-width="1.6" stroke-linejoin="miter"/>
<path d="M1810 68.5 L1829 68.5 L1813.4 84.8 L1795.6 84.8 L1801.6 79" fill="none" stroke="#f2b04f" stroke-width="1.9"/>
<path d="M1794.4 72.6 L1799.8 77.4 L1809.4 62.6" fill="none" stroke="#f2b04f" stroke-width="2.4"/>
</svg>
<div class="abs" style="left:1852px;top:60px;width:40px;height:40px;background:#e4e4e4;border-radius:4px"></div>
<svg style="left:1852px;top:60px" width="46" height="46" viewBox="1852 60 46 46">
<path d="M1882.6 64 L1888 69.4 L1879.2 79 L1873.4 73.6 Z" fill="#3a3a3a"/>
<path d="M1872.4 74.8 C1868 74.4 1865.6 77.4 1865.6 80.6 C1865.6 84 1864.6 86 1861.4 87 C1865 89.8 1871.6 89.4 1875 86 C1877.8 83.2 1878.6 80.6 1878.2 80.2 Z" fill="#3a3a3a"/>
<path d="M1856 88.2 L1860.4 88.2 C1861 90.6 1864 92 1868 92 L1888 92 L1888 95.9 L1856 95.9 Z" fill="#3a3a3a"/>
<path d="M1897 91.6 L1897 104.8 L1883.8 104.8 Z" fill="#1a1a1a"/>
<path d="M1896.4 93.6 L1896.4 104 L1886 104 Z" fill="#e6e6e6"/>
</svg>
<svg style="left:1956px;top:56px" width="50" height="48" viewBox="1956 56 50 48"><circle cx="1980.1" cy="80" r="20.2" fill="#868686"/><circle cx="1980.1" cy="80" r="14.2" fill="#ababab"/><circle cx="1980.1" cy="80" r="8.1" fill="#e6e6e6"/><circle cx="1968" cy="68" r="10.4" fill="#353535"/><path d="M1974.13 66.53 L1976.30 66.69 L1976.30 69.31 L1974.13 69.47 L1973.37 71.29 L1974.80 72.94 L1972.94 74.80 L1971.29 73.37 L1969.47 74.13 L1969.31 76.30 L1966.69 76.30 L1966.53 74.13 L1964.71 73.37 L1963.06 74.80 L1961.20 72.94 L1962.63 71.29 L1961.87 69.47 L1959.70 69.31 L1959.70 66.69 L1961.87 66.53 L1962.63 64.71 L1961.20 63.06 L1963.06 61.20 L1964.71 62.63 L1966.53 61.87 L1966.69 59.70 L1969.31 59.70 L1969.47 61.87 L1971.29 62.63 L1972.94 61.20 L1974.80 63.06 L1973.37 64.71 Z M1964.00 68.00 a4.00 4.00 0 1 0 8.00 0 a4.00 4.00 0 1 0 -8.00 0 Z" fill="#e6e6e6" fill-rule="evenodd"/></svg>
<svg style="left:1990.4px;top:90.0px" width="14" height="14" viewBox="0 0 14 14"><path d="M14 0.6 L14 14 L0.6 14 Z" fill="#1a1a1a"/><path d="M14 2.8 L14 14 L2.8 14 Z" fill="#e6e6e6"/></svg>
<svg style="left:2018px;top:56px" width="50" height="48" viewBox="2018 56 50 48"><path d="M2036.13 68.73 L2038.30 68.89 L2038.30 71.51 L2036.13 71.67 L2035.37 73.49 L2036.80 75.14 L2034.94 77.00 L2033.29 75.57 L2031.47 76.33 L2031.31 78.50 L2028.69 78.50 L2028.53 76.33 L2026.71 75.57 L2025.06 77.00 L2023.20 75.14 L2024.63 73.49 L2023.87 71.67 L2021.70 71.51 L2021.70 68.89 L2023.87 68.73 L2024.63 66.91 L2023.20 65.26 L2025.06 63.40 L2026.71 64.83 L2028.53 64.07 L2028.69 61.90 L2031.31 61.90 L2031.47 64.07 L2033.29 64.83 L2034.94 63.40 L2036.80 65.26 L2035.37 66.91 Z M2026.00 70.20 a4.00 4.00 0 1 0 8.00 0 a4.00 4.00 0 1 0 -8.00 0 Z" fill="#e6e6e6" fill-rule="evenodd"/><g stroke="#e6e6e6" stroke-linecap="round" fill="none"><path d="M2041 80 L2043.4 68.4" stroke-width="4.4"/><path d="M2042 80 L2055.6 71.6" stroke-width="4.6"/><path d="M2042 81 L2052.2 79.6" stroke-width="3.6"/><path d="M2042 82 L2052 87" stroke-width="3.8"/><path d="M2041 82 L2043.8 95.4" stroke-width="4.6"/><path d="M2040 82 L2031 91.6" stroke-width="4.8"/><path d="M2040 81 L2023.6 85.6" stroke-width="3.8"/></g>
<ellipse cx="2040.6" cy="81.2" rx="6.6" ry="6" fill="#e6e6e6"/>
<circle cx="2052" cy="65.8" r="2.1" fill="#e6e6e6"/><circle cx="2054" cy="92" r="2.3" fill="#e6e6e6"/><circle cx="2028.8" cy="96.9" r="1.3" fill="#e6e6e6"/>
</svg>
<svg style="left:2050.4px;top:90.0px" width="14" height="14" viewBox="0 0 14 14"><path d="M14 0.6 L14 14 L0.6 14 Z" fill="#1a1a1a"/><path d="M14 2.8 L14 14 L2.8 14 Z" fill="#e6e6e6"/></svg>
<!--TOPBAR-E-->
<!--LAYERS-S-->
<div class="abs" style="left:1547px;top:400px;width:560px;height:800px;overflow:hidden"><div class="abs" style="left:-50px;top:68px;width:477px;height:609px;background:#464646;box-shadow:0 16px 26px rgba(0,0,0,0.19)"></div></div>
<div class="abs" style="left:1547px;top:468px;width:426px;height:24px;background:linear-gradient(180deg,#2a2a2a 0%,#3d3d3d 8%,#333 35%,#262626 65%,#1b1b1b 100%)"></div>
<div class="abs" style="left:1550.4px;top:472.4px;width:15.2px;height:15.2px;border-radius:50%;background:#ececec;box-shadow:0 0 0 0.8px #5a5a5a"></div>
<div class="abs" style="left:1942px;top:474px;width:24px;height:4px;background:#e8e8e8;box-shadow:0 0 0 0.6px #111"></div>
<div class="abs" style="left:1942px;top:482px;width:24px;height:4px;background:#e8e8e8;box-shadow:0 0 0 0.6px #111"></div>
<div class="abs" style="left:1550px;top:500px;width:420px;height:568px;background:#3e3e3e"></div>
<div class="abs" style="left:1552px;top:502px;width:416px;height:565px;background:#363636"></div>
<div class="abs" style="left:1655px;top:500px;width:315px;height:36px;background:#3e3e3e"></div>
<div class="abs" style="left:1657px;top:500px;width:313px;height:34px;background:#191919"></div>
<div class="abs" style="left:1942px;top:506px;width:24px;height:4px;background:#e8e8e8;box-shadow:0 0 0 0.7px #000"></div>
<div class="abs" style="left:1942px;top:514px;width:24px;height:4px;background:#e8e8e8;box-shadow:0 0 0 0.7px #000"></div>
<div class="abs" style="left:1942px;top:522px;width:24px;height:4px;background:#e8e8e8;box-shadow:0 0 0 0.7px #000"></div>
<svg style="left:1554px;top:504px" width="26" height="26" viewBox="1554 504 26 26"><rect x="1557.1" y="507.2" width="19.8" height="19.8" rx="3.6" fill="none" stroke="#f0f0f0" stroke-width="2.2"/><path d="M1560.8 510.9 L1573.4 523.3 M1573.4 510.9 L1560.8 523.3" stroke="#f0f0f0" stroke-width="1.7"/></svg>
<div class="abs" style="left:1582px;top:504px;font-size:16px;line-height:26px;color:#ececec;white-space:nowrap;font-family:'Noto Sans CJK JP',sans-serif;">レイヤー</div>
<div class="abs" style="left:1560px;top:562px;width:194px;height:24px;border-radius:5px;background:#6d6d6d;box-shadow:0 0 0 0.5px #777"></div>
<div class="abs" style="left:1571px;top:562px;font-size:16px;line-height:24px;color:#c6c6c6;white-space:nowrap;font-family:'Noto Sans CJK JP',sans-serif;">デフォルト</div>
<svg style="left:1736px;top:565px" width="10" height="18" viewBox="0 0 10 18"><path d="M1.6 6.6 L5 3.2 L8.4 6.6 M1.6 11.4 L5 14.8 L8.4 11.4" fill="none" stroke="#f4f4f4" stroke-width="1.8"/></svg>
<div class="abs" style="left:1764px;top:562px;width:194px;height:24px;border-radius:5px;background:#6d6d6d;box-shadow:0 0 0 0.5px #777"></div>
<div class="abs" style="left:1775px;top:562px;font-size:16px;line-height:24px;color:#c6c6c6;white-space:nowrap;font-family:'Noto Sans CJK JP',sans-serif;">無視</div>
<svg style="left:1940px;top:565px" width="10" height="18" viewBox="0 0 10 18"><path d="M1.6 6.6 L5 3.2 L8.4 6.6 M1.6 11.4 L5 14.8 L8.4 11.4" fill="none" stroke="#f4f4f4" stroke-width="1.8"/></svg>
<svg style="left:1556px;top:602px" width="98" height="32" viewBox="1556 602 98 32"><rect x="1558" y="604" width="4" height="4" fill="#b4b4b4"/><rect x="1566" y="604" width="4" height="4" fill="#b4b4b4"/><rect x="1574" y="604" width="4" height="4" fill="#b4b4b4"/><rect x="1582" y="604" width="4" height="4" fill="#b4b4b4"/><rect x="1562" y="608" width="4" height="4" fill="#7c7c7c"/><rect x="1570" y="608" width="4" height="4" fill="#7c7c7c"/><rect x="1578" y="608" width="4" height="4" fill="#7c7c7c"/><rect x="1558" y="612" width="4" height="4" fill="#b4b4b4"/><rect x="1566" y="612" width="4" height="4" fill="#b4b4b4"/><rect x="1574" y="612" width="4" height="4" fill="#b4b4b4"/><rect x="1582" y="612" width="4" height="4" fill="#b4b4b4"/><rect x="1562" y="616" width="4" height="4" fill="#7c7c7c"/><rect x="1570" y="616" width="4" height="4" fill="#7c7c7c"/><rect x="1578" y="616" width="4" height="4" fill="#7c7c7c"/><rect x="1558" y="620" width="4" height="4" fill="#b4b4b4"/><rect x="1566" y="620" width="4" height="4" fill="#b4b4b4"/><rect x="1574" y="620" width="4" height="4" fill="#b4b4b4"/><rect x="1582" y="620" width="4" height="4" fill="#b4b4b4"/><rect x="1562" y="624" width="4" height="4" fill="#7c7c7c"/><rect x="1570" y="624" width="4" height="4" fill="#7c7c7c"/><rect x="1578" y="624" width="4" height="4" fill="#7c7c7c"/><rect x="1558" y="628" width="4" height="4" fill="#b4b4b4"/><rect x="1566" y="628" width="4" height="4" fill="#b4b4b4"/><rect x="1574" y="628" width="4" height="4" fill="#b4b4b4"/><rect x="1582" y="628" width="4" height="4" fill="#b4b4b4"/><rect x="1557" y="603" width="13" height="17" fill="#363636"/><rect x="1558" y="610.4" width="10.2" height="7.6" fill="#ececec"/><path d="M1560.9 611 L1560.9 607.6 A2.2 2.2 0 0 1 1565.3 607.6 L1565.3 611" fill="none" stroke="#ececec" stroke-width="1.8"/><rect x="1562.5" y="612.6" width="1.2" height="3.2" fill="#444"/><rect x="1599.2" y="615" width="17.6" height="15.8" fill="#7e7e7e" stroke="#ececec" stroke-width="2.3"/><rect x="1591.3" y="605.3" width="17.7" height="15.9" fill="#363636" stroke="#ececec" stroke-width="2.3"/><g transform="rotate(-45 1603 617)"><rect x="1600.6" y="603" width="4.8" height="7" rx="2.4" fill="#ececec"/><rect x="1598.6" y="608.6" width="8.8" height="2.8" fill="#ececec"/><path d="M1601 611 L1605 611 L1605 626 L1603 629 L1601 626 Z" fill="#444" stroke="#ececec" stroke-width="1.2"/></g><rect x="1631.2" y="613.1" width="17.8" height="17.8" fill="#7e7e7e" stroke="#ececec" stroke-width="2.3"/><rect x="1623.3" y="605.3" width="17.6" height="17.7" fill="#363636" fill-opacity="0.0" stroke="#ececec" stroke-width="2.3"/><rect x="1632.4" y="614.3" width="7.4" height="7.6" fill="#3c3c3c"/><path d="M1631.2 621.9 L1631.2 613.1 L1639.8 613.1" fill="none" stroke="#8c8c8c" stroke-width="2.3"/></svg>
<div class="abs" style="left:1658px;top:603px;width:220px;height:30px;background:#484848"></div>
<div class="abs" style="left:1658px;top:603px;width:220px;height:26px;background:linear-gradient(90deg,#646464 0%,#666 80%,#6e6e6e 86%,#8a8a8a 100%)"></div>
<div class="abs" style="left:1885px;top:603px;width:78px;height:30px;background:#232323;border:1px solid #585858;color:#f2f2f2;font-size:19px;line-height:28px;text-align:right;padding-right:7px;font-family:'Liberation Sans',sans-serif">100%</div>
<div class="abs" style="left:1556px;top:645px;width:322px;height:30px;background:#444"></div>
<div class="abs" style="left:1580px;top:645px;width:298px;height:26px;background:#363636"></div>
<div class="abs" style="left:1560px;top:646px;font-size:16.5px;line-height:26px;color:#727272;white-space:nowrap;font-family:'Noto Sans CJK JP',sans-serif;">表示奥行き:</div>
<div class="abs" style="left:1885px;top:645px;width:78px;height:30px;background:#3c3c3c;border:1px solid #565656;color:#7c7c7c;font-size:19px;line-height:28px;text-align:right;padding-right:7px;font-family:'Liberation Sans',sans-serif">75%</div>
<div class="abs" style="left:1556px;top:684px;width:408px;height:326px;background:#282828;border:2px solid #000"></div>
<div class="abs" style="left:1558px;top:686px;width:404px;height:76px;background:#666"></div>
<div class="abs" style="left:1558px;top:762px;width:404px;height:2px;background:#3c3c3c"></div>
<div class="abs" style="left:1594px;top:686px;width:2px;height:76px;background:#000"></div>
<svg style="left:1560px;top:714px" width="32" height="20" viewBox="1560 714 32 20"><path d="M1561.8 724 C1567 719 1571 715.8 1576 715.8 C1581 715.8 1585 719 1590.2 724 C1585 729 1581 732.2 1576 732.2 C1571 732.2 1567 729 1561.8 724 Z" fill="#e8e8e8"/><path d="M1566.4 724.6 C1568.6 722.8 1571.4 722.0 1573.6 722.4 C1573.4 724.2 1572.4 725.6 1570.6 725.8 L1571.4 727.6 Z" fill="#444"/><path d="M1582.2 722.4 L1585.6 724.6 L1581.2 727.6 C1582.2 726.0 1582.6 724.0 1582.2 722.4 Z" fill="#444"/></svg>
<div class="abs" style="left:1608px;top:688px;width:72px;height:72px;background:#fff;border:1px solid #000"></div>
<svg style="left:1612px;top:706px" width="64" height="36" viewBox="0 0 64 36"><rect x="0" y="0" width="8" height="8" fill="#cdcdcd"/><rect x="16" y="0" width="8" height="8" fill="#cdcdcd"/><rect x="32" y="0" width="8" height="8" fill="#cdcdcd"/><rect x="48" y="0" width="8" height="8" fill="#cdcdcd"/><rect x="8" y="8" width="8" height="8" fill="#cdcdcd"/><rect x="24" y="8" width="8" height="8" fill="#cdcdcd"/><rect x="40" y="8" width="8" height="8" fill="#cdcdcd"/><rect x="56" y="8" width="8" height="8" fill="#cdcdcd"/><rect x="0" y="16" width="8" height="8" fill="#cdcdcd"/><rect x="16" y="16" width="8" height="8" fill="#cdcdcd"/><rect x="32" y="16" width="8" height="8" fill="#cdcdcd"/><rect x="48" y="16" width="8" height="8" fill="#cdcdcd"/><rect x="8" y="24" width="8" height="8" fill="#cdcdcd"/><rect x="24" y="24" width="8" height="8" fill="#cdcdcd"/><rect x="40" y="24" width="8" height="8" fill="#cdcdcd"/><rect x="56" y="24" width="8" height="8" fill="#cdcdcd"/><rect x="0" y="32" width="8" height="4" fill="#cdcdcd"/><rect x="16" y="32" width="8" height="4" fill="#cdcdcd"/><rect x="32" y="32" width="8" height="4" fill="#cdcdcd"/><rect x="48" y="32" width="8" height="4" fill="#cdcdcd"/></svg>
<div class="abs" style="left:1692px;top:706px;font-size:20.5px;line-height:30px;color:#ececec;white-space:nowrap;font-family:'Noto Sans CJK JP',sans-serif">レイヤー<span style="font-size:22.5px;margin-left:7px;font-family:'Liberation Sans',sans-serif">3</span></div>
<svg style="left:1928px;top:688.3px" width="32" height="32" viewBox="1928 0 32 32"><path d="M1949.6 10.3 L1957.4 21.5 L1938 29.6 L1930.4 18.3 Z" fill="#7e7e7e" stroke="#ececec" stroke-width="1.9"/><path d="M1949.6 2.3 L1957.4 13.5 L1938 21.6 L1930.4 10.3 Z" fill="#b4b4b4" stroke="#ececec" stroke-width="1.9"/></svg>
<div class="abs" style="left:1558px;top:764px;width:404px;height:76px;background:#666"></div>
<div class="abs" style="left:1558px;top:840px;width:404px;height:2px;background:#3c3c3c"></div>
<div class="abs" style="left:1594px;top:764px;width:2px;height:76px;background:#000"></div>
<svg style="left:1560px;top:792px" width="32" height="20" viewBox="1560 792 32 20"><path d="M1561.8 802 C1567 797 1571 793.8 1576 793.8 C1581 793.8 1585 797 1590.2 802 C1585 807 1581 810.2 1576 810.2 C1571 810.2 1567 807 1561.8 802 Z" fill="#e8e8e8"/><path d="M1566.4 802.6 C1568.6 800.8 1571.4 800.0 1573.6 800.4 C1573.4 802.2 1572.4 803.6 1570.6 803.8 L1571.4 805.6 Z" fill="#444"/><path d="M1582.2 800.4 L1585.6 802.6 L1581.2 805.6 C1582.2 804.0 1582.6 802.0 1582.2 800.4 Z" fill="#444"/></svg>
<div class="abs" style="left:1608px;top:766px;width:72px;height:72px;background:#fff;border:1px solid #000"></div>
<svg style="left:1612px;top:784px" width="64" height="36" viewBox="0 0 64 36"><rect x="0" y="0" width="8" height="8" fill="#cdcdcd"/><rect x="16" y="0" width="8" height="8" fill="#cdcdcd"/><rect x="32" y="0" width="8" height="8" fill="#cdcdcd"/><rect x="48" y="0" width="8" height="8" fill="#cdcdcd"/><rect x="8" y="8" width="8" height="8" fill="#cdcdcd"/><rect x="24" y="8" width="8" height="8" fill="#cdcdcd"/><rect x="40" y="8" width="8" height="8" fill="#cdcdcd"/><rect x="56" y="8" width="8" height="8" fill="#cdcdcd"/><rect x="0" y="16" width="8" height="8" fill="#cdcdcd"/><rect x="16" y="16" width="8" height="8" fill="#cdcdcd"/><rect x="32" y="16" width="8" height="8" fill="#cdcdcd"/><rect x="48" y="16" width="8" height="8" fill="#cdcdcd"/><rect x="8" y="24" width="8" height="8" fill="#cdcdcd"/><rect x="24" y="24" width="8" height="8" fill="#cdcdcd"/><rect x="40" y="24" width="8" height="8" fill="#cdcdcd"/><rect x="56" y="24" width="8" height="8" fill="#cdcdcd"/><rect x="0" y="32" width="8" height="4" fill="#cdcdcd"/><rect x="16" y="32" width="8" height="4" fill="#cdcdcd"/><rect x="32" y="32" width="8" height="4" fill="#cdcdcd"/><rect x="48" y="32" width="8" height="4" fill="#cdcdcd"/></svg>
<div class="abs" style="left:1692px;top:784px;font-size:20.5px;line-height:30px;color:#ececec;white-space:nowrap;font-family:'Noto Sans CJK JP',sans-serif">レイヤー<span style="font-size:22.5px;margin-left:7px;font-family:'Liberation Sans',sans-serif">2</span></div>
<svg style="left:1928px;top:766.3px" width="32" height="32" viewBox="1928 0 32 32"><path d="M1949.6 10.3 L1957.4 21.5 L1938 29.6 L1930.4 18.3 Z" fill="#7e7e7e" stroke="#ececec" stroke-width="1.9"/><path d="M1949.6 2.3 L1957.4 13.5 L1938 21.6 L1930.4 10.3 Z" fill="#b4b4b4" stroke="#ececec" stroke-width="1.9"/></svg>
<div class="abs" style="left:1558px;top:842px;width:404px;height:76px;background:#282828"></div>
<div class="abs" style="left:1558px;top:918px;width:404px;height:2px;background:#3c3c3c"></div>
<div class="abs" style="left:1594px;top:842px;width:2px;height:76px;background:#000"></div>
<svg style="left:1560px;top:870px" width="32" height="20" viewBox="1560 870 32 20"><path d="M1561.8 880 C1567 875 1571 871.8 1576 871.8 C1581 871.8 1585 875 1590.2 880 C1585 885 1581 888.2 1576 888.2 C1571 888.2 1567 885 1561.8 880 Z" fill="#e8e8e8"/><path d="M1566.4 880.6 C1568.6 878.8 1571.4 878.0 1573.6 878.4 C1573.4 880.2 1572.4 881.6 1570.6 881.8 L1571.4 883.6 Z" fill="#444"/><path d="M1582.2 878.4 L1585.6 880.6 L1581.2 883.6 C1582.2 882.0 1582.6 880.0 1582.2 878.4 Z" fill="#444"/></svg>
<div class="abs" style="left:1608px;top:844px;width:72px;height:72px;background:#fff;border:1px solid #000"></div>
<svg style="left:1612px;top:862px" width="64" height="36" viewBox="0 0 64 36"><rect x="0" y="0" width="8" height="8" fill="#cdcdcd"/><rect x="16" y="0" width="8" height="8" fill="#cdcdcd"/><rect x="32" y="0" width="8" height="8" fill="#cdcdcd"/><rect x="48" y="0" width="8" height="8" fill="#cdcdcd"/><rect x="8" y="8" width="8" height="8" fill="#cdcdcd"/><rect x="24" y="8" width="8" height="8" fill="#cdcdcd"/><rect x="40" y="8" width="8" height="8" fill="#cdcdcd"/><rect x="56" y="8" width="8" height="8" fill="#cdcdcd"/><rect x="0" y="16" width="8" height="8" fill="#cdcdcd"/><rect x="16" y="16" width="8" height="8" fill="#cdcdcd"/><rect x="32" y="16" width="8" height="8" fill="#cdcdcd"/><rect x="48" y="16" width="8" height="8" fill="#cdcdcd"/><rect x="8" y="24" width="8" height="8" fill="#cdcdcd"/><rect x="24" y="24" width="8" height="8" fill="#cdcdcd"/><rect x="40" y="24" width="8" height="8" fill="#cdcdcd"/><rect x="56" y="24" width="8" height="8" fill="#cdcdcd"/><rect x="0" y="32" width="8" height="4" fill="#cdcdcd"/><rect x="16" y="32" width="8" height="4" fill="#cdcdcd"/><rect x="32" y="32" width="8" height="4" fill="#cdcdcd"/><rect x="48" y="32" width="8" height="4" fill="#cdcdcd"/></svg>
<div class="abs" style="left:1692px;top:862px;font-size:20.5px;line-height:30px;color:#ececec;white-space:nowrap;font-family:'Noto Sans CJK JP',sans-serif">レイヤー<span style="font-size:22.5px;margin-left:7px;font-family:'Liberation Sans',sans-serif">1</span></div>
<svg style="left:1928px;top:844.3px" width="32" height="32" viewBox="1928 0 32 32"><path d="M1949.6 10.3 L1957.4 21.5 L1938 29.6 L1930.4 18.3 Z" fill="#7e7e7e" stroke="#ececec" stroke-width="1.9"/><path d="M1949.6 2.3 L1957.4 13.5 L1938 21.6 L1930.4 10.3 Z" fill="#b4b4b4" stroke="#ececec" stroke-width="1.9"/></svg>
<div class="abs" style="left:1558px;top:920px;width:404px;height:76px;background:#282828"></div>
<div class="abs" style="left:1558px;top:996px;width:404px;height:2px;background:#3c3c3c"></div>
<div class="abs" style="left:1594px;top:920px;width:2px;height:76px;background:#000"></div>
<svg style="left:1560px;top:948px" width="32" height="20" viewBox="1560 948 32 20"><path d="M1561.8 958 C1567 953 1571 949.8 1576 949.8 C1581 949.8 1585 953 1590.2 958 C1585 963 1581 966.2 1576 966.2 C1571 966.2 1567 963 1561.8 958 Z" fill="#e8e8e8"/><path d="M1566.4 958.6 C1568.6 956.8 1571.4 956.0 1573.6 956.4 C1573.4 958.2 1572.4 959.6 1570.6 959.8 L1571.4 961.6 Z" fill="#444"/><path d="M1582.2 956.4 L1585.6 958.6 L1581.2 961.6 C1582.2 960.0 1582.6 958.0 1582.2 956.4 Z" fill="#444"/></svg>
<div class="abs" style="left:1608px;top:922px;width:72px;height:72px;background:#fff;border:1px solid #000"></div>
<div class="abs" style="left:1692px;top:940px;font-size:20.5px;line-height:30px;color:#ececec;white-space:nowrap;font-family:'Noto Sans CJK JP',sans-serif">キャンバス</div>
<svg style="left:1928px;top:922.3px" width="32" height="32" viewBox="1928 0 32 32"><path d="M1949.6 6.3 L1957.4 17.5 L1938 25.6 L1930.4 14.3 Z" fill="#8a8a8a" stroke="#ececec" stroke-width="1.9"/></svg>
<svg style="left:1554px;top:1014px" width="416px" height="52" viewBox="1554 1014 416 52"><path d="M1577.5 1029.2 L1585.0 1037.2 L1566.2 1044.6 L1559.2 1036.5 Z" fill="#d8d8d8" stroke="#e6e6e6" stroke-width="1.8" stroke-linejoin="miter"/><path d="M1577.5 1024.4 L1585.0 1032.4 L1566.2 1039.8 L1559.2 1031.7 Z" fill="#5c6c9c" stroke="#e6e6e6" stroke-width="1.8" stroke-linejoin="miter"/><path d="M1577.5 1019.2 L1585.0 1027.2 L1566.2 1034.6 L1559.2 1026.5 Z" fill="#363636" stroke="#e6e6e6" stroke-width="1.8" stroke-linejoin="miter"/><path d="M1588.4 1035.2 L1588.4 1048.2 L1575.4 1048.2 Z" fill="#111"/><path d="M1588.0 1037.2 L1588.0 1047.8 L1577.4 1047.8 Z" fill="#e6e6e6"/><path d="M1610 1023.2 L1614.4 1018.8 M1618 1031.2 L1622.4 1027" stroke="#e6e6e6" stroke-width="3.6" stroke-linecap="round"/><path d="M1605.4 1020.6 L1620.6 1036 C1616 1041 1609.6 1041.4 1606.6 1039.4 L1599 1047 L1595.8 1047 L1595.8 1043.4 L1603.2 1036 C1600.6 1031.6 1601.4 1025 1605.4 1020.6 Z" fill="#e6e6e6"/><path d="M1626.4 1035.2 L1626.4 1048.2 L1613.4 1048.2 Z" fill="#111"/><path d="M1626.0 1037.2 L1626.0 1047.8 L1615.4 1047.8 Z" fill="#e6e6e6"/><path d="M1653.7 1027.0 L1661.2 1037.6 L1642.6 1045.0 L1635.0 1034.4 Z" fill="#8a8a8a" stroke="#e6e6e6" stroke-width="1.8" stroke-linejoin="miter"/><path d="M1653.7 1019.0 L1661.2 1029.6 L1642.6 1037.0 L1635.0 1026.4 Z" fill="#b4b4b4" stroke="#e6e6e6" stroke-width="1.8" stroke-linejoin="miter"/><rect x="1632" y="1016" width="14" height="14" fill="#363636"/><path d="M1634.0 1023.0 L1644.0 1023.0 M1639.0 1018.0 L1639.0 1028.0" stroke="#f0f0f0" stroke-width="2.4"/><path d="M1685.7 1027.0 L1693.2 1037.6 L1674.6 1045.0 L1667.0 1034.4 Z" fill="#8a8a8a" stroke="#e6e6e6" stroke-width="1.8" stroke-linejoin="miter"/><path d="M1685.7 1019.0 L1693.2 1029.6 L1674.6 1037.0 L1667.0 1026.4 Z" fill="#e0912a" stroke="#e0912a" stroke-width="1.2" stroke-linejoin="miter"/><path d="M1674.6 1035 L1693.4 1027.6 L1693.4 1031.6 L1674.6 1039.4 Z" fill="#f0f0f0"/><path d="M1676 1028.6 L1689 1023.4 M1675 1033 L1692 1026.2" stroke="#f4e8d0" stroke-width="0.9"/><rect x="1664" y="1016" width="14" height="14" fill="#363636"/><path d="M1666.0 1023.0 L1676.0 1023.0 M1671.0 1018.0 L1671.0 1028.0" stroke="#f0f0f0" stroke-width="2.4"/><path d="M1717.9 1027.0 L1725.4 1037.6 L1706.8 1045.0 L1699.2 1034.4 Z" fill="#8a8a8a" stroke="#e6e6e6" stroke-width="1.8" stroke-linejoin="miter"/><path d="M1710.4 1018.8 C1711.4 1024 1717.4 1027 1716.8 1033.4 C1716.4 1037.4 1713.4 1039.6 1710 1039.6 C1706.4 1039.6 1703.2 1036.8 1703.6 1032.6 C1704 1029.6 1709.4 1029 1710.4 1018.8 Z" fill="#5c6c9c" stroke="#e6e6e6" stroke-width="1.4"/><path d="M1706.6 1032 C1708 1035 1711.4 1036 1714 1034.6" stroke="#222" stroke-width="1.3" fill="none"/><rect x="1696.2" y="1016" width="11" height="14" fill="#363636"/><path d="M1698.1 1023.0 L1708.1 1023.0 M1703.1 1018.0 L1703.1 1028.0" stroke="#f0f0f0" stroke-width="2.4"/><path d="M1749.9 1027.0 L1757.4 1037.6 L1738.8 1045.0 L1731.2 1034.4 Z" fill="#8a8a8a" stroke="#e6e6e6" stroke-width="1.8" stroke-linejoin="miter"/><path d="M1733 1032 L1745 1027 L1749 1024 L1752 1030 L1756.6 1037 L1748 1040.4 C1746 1037 1742 1036 1738 1036.6 Z" fill="#e6e6e6"/><circle cx="1749.4" cy="1035.2" r="4.6" fill="#e6e6e6"/><path d="M1746.4 1033.6 C1747.6 1032 1751 1032 1752.4 1033.6" stroke="#555" stroke-width="1.2" fill="none"/><path d="M1742.6 1019.4 C1747.6 1017.4 1750.6 1021 1749.8 1026" fill="none" stroke="#e6e6e6" stroke-width="1.8"/><rect x="1728.2" y="1016" width="13" height="14" fill="#363636"/><path d="M1729.9 1023.0 L1739.9 1023.0 M1734.9 1018.0 L1734.9 1028.0" stroke="#f0f0f0" stroke-width="2.4"/><rect x="1804" y="1018" width="28" height="28" fill="#e6e6e6"/><circle cx="1818" cy="1032" r="10" fill="#363636"/><rect x="1846" y="1028" width="20" height="18" fill="#e6e6e6"/><path d="M1851 1028.4 L1851 1024.2 A5 5 0 0 1 1861 1024.2 L1861 1028.4" fill="none" stroke="#e6e6e6" stroke-width="2.4"/><circle cx="1856" cy="1035.7" r="2.2" fill="#363636"/><rect x="1855" y="1036" width="2" height="6" fill="#363636"/><rect x="1932" y="1020.2" width="24" height="3.6" fill="#e6e6e6"/><rect x="1940" y="1018" width="8" height="3" fill="#e6e6e6"/><path d="M1933.6 1026.2 L1954.2 1026.2 L1952 1046.1 L1935.9 1046.1 Z" fill="#e6e6e6"/><rect x="1939.8" y="1030" width="2" height="12" fill="#363636"/><rect x="1945.9" y="1030" width="2" height="12" fill="#363636"/><circle cx="1744.0" cy="1058" r="4.1" fill="#d2d2d2"/><circle cx="1759.9" cy="1058" r="4.1" fill="#d2d2d2"/><circle cx="1775.8" cy="1058" r="4.1" fill="#d2d2d2"/></svg>
<!--LAYERS-E-->
</body>
</html>
